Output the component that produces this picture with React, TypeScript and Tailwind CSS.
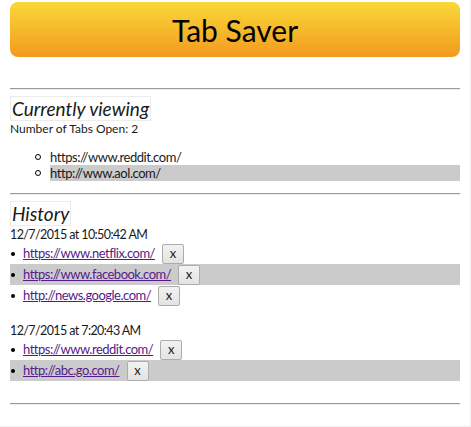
import React from 'react';

const current = ['https://www.reddit.com/', 'http://www.aol.com/'];

const history = [
  {
    when: '12/7/2015 at 10:50:42 AM',
    urls: ['https://www.netflix.com/', 'https://www.facebook.com/', 'http://news.google.com/'],
  },
  {
    when: '12/7/2015 at 7:20:43 AM',
    urls: ['https://www.reddit.com/', 'http://abc.go.com/'],
  },
];

const Rule: React.FC<{ className?: string }> = ({ className = '' }) => (
  <div className={`border-t border-b border-t-[#9a9a9a] border-b-[#ededed] ${className}`} />
);

const SectionTitle: React.FC<{ children: React.ReactNode }> = ({ children }) => (
  <div className="flex">
    <h2 className="border border-[#ececec] px-[1px] text-[19px] italic leading-[23px] font-normal">
      {children}
    </h2>
  </div>
);

const HistoryRow: React.FC<{ url: string; shaded: boolean }> = ({ url, shaded }) => (
  <li className={`flex h-[21px] items-center ${shaded ? 'bg-[#cbcbcb]' : ''}`}>
    <span className="ml-[1px] h-[4px] w-[4px] rounded-full bg-black" />
    <a href={url} className="ml-[8px] text-[13px] text-[#551a8b] underline tracking-[-0.5px]">
      {url}
    </a>
    <button className="ml-[7px] flex h-[20px] w-[22px] items-center justify-center rounded-[2px] border border-[#acacac] bg-gradient-to-b from-[#f2f2f2] to-[#e3e3e3] text-[13px] leading-none">
      x
    </button>
  </li>
);

export default function App() {
  return (
    <div className="h-[427px] w-[471px] border-r border-b border-[#f0f0f0] bg-white px-[10px] pt-[2px] font-['Lato',sans-serif] text-[12px] text-[#1a1a1a]">
      <div className="flex h-[55px] items-center justify-center rounded-[8px] bg-gradient-to-b from-[#f9d838] to-[#f29a1e]">
        <h1 className="text-[30px] leading-none text-black">Tab Saver</h1>
      </div>

      <Rule className="mt-[31px]" />

      <div className="mt-[6px]">
        <SectionTitle>Currently viewing</SectionTitle>
        <p className="leading-[16px]">Number of Tabs Open: {current.length}</p>
        <ul className="mt-[12px] pl-[40px] text-[13px] tracking-[-0.45px]">
          {current.map((url, i) => (
            <li
              key={url}
              className={`relative leading-[16px] ${i % 2 === 1 ? 'bg-[#cbcbcb]' : ''}`}
            >
              <span className="absolute left-[-15px] top-[5px] h-[6px] w-[6px] rounded-full border border-black" />
              {url}
            </li>
          ))}
        </ul>
      </div>

      <Rule className="mt-[12px]" />

      <div className="mt-[6px]">
        <SectionTitle>History</SectionTitle>
        {history.map((group, g) => (
          <div key={group.when} className={g > 0 ? 'mt-[16px]' : ''}>
            <p className="text-[12.5px] leading-[17px] tracking-[-0.6px]">{group.when}</p>
            <ul>
              {group.urls.map((url, i) => (
                <HistoryRow key={url} url={url} shaded={i % 2 === 1} />
              ))}
            </ul>
          </div>
        ))}
      </div>

      <Rule className="mt-[22px]" />
    </div>
  );
}
